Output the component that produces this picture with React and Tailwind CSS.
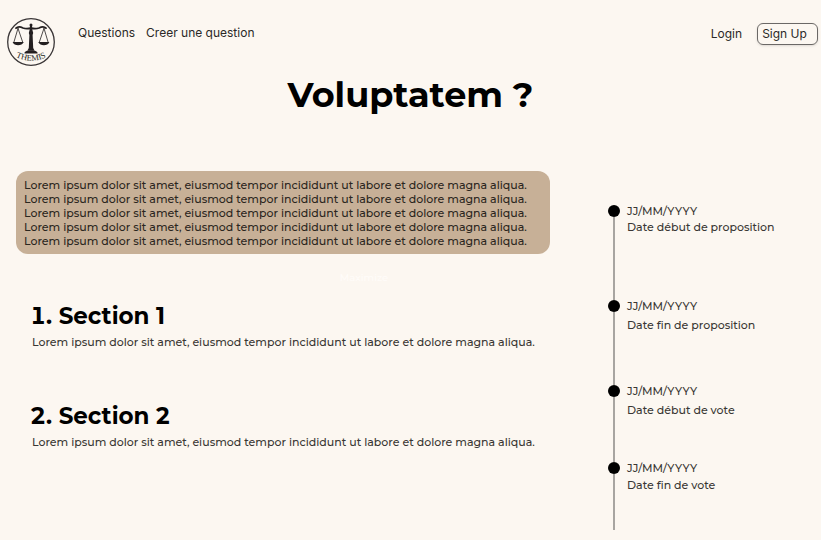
const LOREM =
  "Lorem ipsum dolor sit amet, eiusmod tempor incididunt ut labore et dolore magna aliqua.";

const SECTIONS = ["Section 1", "Section 2"];

const STEPS = [
  { label: "Date début de proposition", row: "h-[95px]", gap: "gap-0" },
  { label: "Date fin de proposition", row: "h-[85px]", gap: "gap-[3px]" },
  { label: "Date début de vote", row: "h-[77px]", gap: "gap-[3px]" },
  { label: "Date fin de vote", row: "h-[68px]", gap: "gap-px" },
];

function Logo() {
  return (
    <svg viewBox="0 0 50 50" className="size-[50px]" role="img" aria-label="Themis">
      <circle cx="25" cy="25" r="23.3" fill="none" stroke="#3a3637" strokeWidth="1.3" />
      <g fill="none" stroke="#231f20" strokeLinecap="round">
        <path d="M10 11.200c2-2 4.500-1.500 7-.2 3 1.200 5.500.8 8 .2 2.500.6 5 1 8-.2 2.500-1.300 5-1.800 7 .2" strokeWidth="1.800" />
        <path d="M12 11.300 7.800 25.500M12 11.300 16.800 25.500M38 11.300 33.200 25.500M38 11.300 42.200 25.500" strokeWidth=".8" />
      </g>
      <g fill="#231f20">
        <circle cx="25" cy="8" r="1.500" />
        <path d="M24 9h2l.4 4 .8 3-.6 2 .6 13 1.300 2.500h-7l1.300-2.500.6-13-.6-2 .8-3z" />
        <path d="M18.500 35.500c1-1.700 3.500-2.300 6.500-2.300s5.500.6 6.500 2.300v1h-13z" />
        <path d="M6.600 25h11c-.8 2.300-3 3.200-5.500 3.200S7.400 27.300 6.600 25zM32.400 25h11c-.8 2.300-3 3.200-5.500 3.200s-4.700-.9-5.500-3.200z" />
      </g>
      <path id="logo-arc" d="M7 38.500Q25 49 43 38.500" fill="none" />
      <text fontSize="8.500" fill="#231f20" textAnchor="middle" className="font-['Liberation_Serif',serif] font-normal">
        <textPath href="#logo-arc" startOffset="50%">THEMIS</textPath>
      </text>
    </svg>
  );
}

export default function App() {
  return (
    <div className="min-h-screen bg-[#fcf7f1] font-['Montserrat','Inter',sans-serif] text-[11px] font-medium text-[#3a3734]">
      <header className="flex items-start pt-[17px] pr-[3px] pl-1.5 font-['Inter',sans-serif] text-xs font-normal text-[#2b2927]">
        <a href="#accueil">
          <Logo />
        </a>
        <nav className="ml-[22px] flex gap-[11px] pt-1.5 leading-5">
          <a href="#questions">Questions</a>
          <a href="#creer">Creer une question</a>
        </nav>
        <div className="ml-auto flex items-center gap-[15px] pt-[6px]">
          <a href="#login">Login</a>
          <button type="button" className="h-[22px] w-[61px] rounded-md border border-[#6b6866] pr-1.5 shadow-sm">
            Sign Up
          </button>
        </div>
      </header>

      <h1 className="mt-[5px] text-center text-[35px] leading-[46px] font-bold text-black">Voluptatem ?</h1>

      <main className="flex pt-[53px] pl-4">
        <div className="w-[534px] shrink-0">
          <div className="rounded-xl bg-[#c7b097] px-2 pt-[7px] pb-1.5 leading-[14px] text-[#2b2620]">
            {[0, 1, 2, 3, 4].map((n) => (
              <p key={n} className="whitespace-nowrap">{LOREM}</p>
            ))}
          </div>
          <p className="mt-4 pl-[162px] text-center text-[10px] leading-4 text-[#fffcf9]">Maximize</p>
          <div className="flex flex-col gap-[50px] pt-3.5 pl-3.5">
            {SECTIONS.map((title, i) => (
              <section key={title}>
                <h2 className="text-[23px] leading-8 font-bold text-black">
                  <span className="tabular-nums">{i + 1}.</span> {title}
                </h2>
                <p className="pt-0.5 pl-0.5 leading-4 whitespace-nowrap">{LOREM}</p>
              </section>
            ))}
          </div>
        </div>

        <ol className="mt-8 ml-[58px] flex-1">
          {STEPS.map((step) => (
            <li key={step.label} className={`flex gap-[7px] ${step.row}`}>
              <div className="flex w-3 flex-col items-center">
                <span className="mt-[2px] size-3 shrink-0 rounded-full bg-black" />
                <span className="-mb-[2px] w-0.5 flex-1 bg-[#a8a5a1]" />
              </div>
              <div className={`flex flex-col leading-4 ${step.gap}`}>
                <time>JJ/MM/YYYY</time>
                <span>{step.label}</span>
              </div>
            </li>
          ))}
        </ol>
      </main>
    </div>
  );
}
